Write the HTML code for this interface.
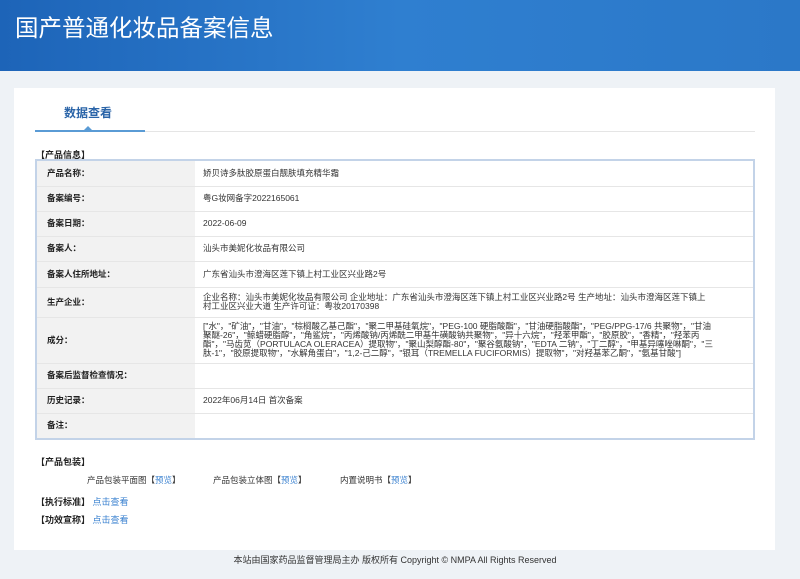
<!DOCTYPE html><html><head><meta charset="utf-8"><style>
body{margin:0;width:800px;height:579px;background:#eef2f6;font-family:"Liberation Sans","Noto Sans CJK SC",sans-serif;overflow:hidden;position:relative}
.hd{position:absolute;left:0;top:0;width:800px;height:71px;background:linear-gradient(90deg,#1d64b8,#2f7fd0 50%,#2b78c8)}
.hd h1{margin:0;position:absolute;left:15px;top:9px;font-size:23.5px;font-weight:normal;color:#fff;letter-spacing:0}
.pn{position:absolute;left:14px;top:88px;width:761px;height:462px;background:#fff}
.tab{position:absolute;left:64px;top:104px;font-size:12px;color:#2a64a8;font-weight:bold}
.ul{position:absolute;left:35px;top:130px;width:110px;height:2px;background:#5a9bd5}
.gl{position:absolute;left:145px;top:131px;width:610px;height:1px;background:#e5e5e5}
.tri{position:absolute;left:84px;top:126px;border:4px solid transparent;border-bottom-color:#5a9bd5;border-top:0}
.s{position:absolute;font-size:9px;color:#222;font-weight:bold}
table{position:absolute;left:35px;top:159px;width:720px;border-collapse:collapse;border:2px solid #c3d3e8;font-size:8.5px;color:#333}
td{border-bottom:1px solid #e6e6e6;padding:0 8px;line-height:9px}
td.l{width:140px;background:#f2f2f2;font-weight:bold;color:#222;padding-left:10px}
td.w{padding-right:40px}
.t{position:absolute;font-size:8.5px;color:#333}
a{color:#3b82d0;text-decoration:none}
.ft{position:absolute;top:553px;left:0;width:790px;text-align:center;font-size:9px;color:#333}
</style></head><body>
<div class="hd"><h1>国产普通化妆品备案信息</h1></div>
<div class="pn"></div>
<div class="tab">数据查看</div><div class="ul"></div><div class="gl"></div><div class="tri"></div>
<div class="s" style="left:36px;top:148px">【产品信息】</div>
<table>
<tr style="height:26px"><td class="l">产品名称：</td><td>娇贝诗多肽胶原蛋白靓肤填充精华霜</td></tr>
<tr style="height:25px"><td class="l">备案编号：</td><td>粤G妆网备字2022165061</td></tr>
<tr style="height:25px"><td class="l">备案日期：</td><td>2022-06-09</td></tr>
<tr style="height:25px"><td class="l">备案人：</td><td>汕头市美妮化妆品有限公司</td></tr>
<tr style="height:26px"><td class="l">备案人住所地址：</td><td>广东省汕头市澄海区莲下镇上村工业区兴业路2号</td></tr>
<tr style="height:30px"><td class="l">生产企业：</td><td class="w">企业名称：汕头市美妮化妆品有限公司 企业地址：广东省汕头市澄海区莲下镇上村工业区兴业路2号 生产地址：汕头市澄海区莲下镇上村工业区兴业大道 生产许可证：粤妆20170398</td></tr>
<tr style="height:46px"><td class="l">成分：</td><td class="w">["水"，"矿油"，"甘油"，"棕榈酸乙基己酯"，"聚二甲基硅氧烷"，"PEG-100 硬脂酸酯"，"甘油硬脂酸酯"，"PEG/PPG-17/6 共聚物"，"甘油聚醚-26"，"鲸蜡硬脂醇"，"角鲨烷"，"丙烯酸钠/丙烯酰二甲基牛磺酸钠共聚物"，"异十六烷"，"羟苯甲酯"，"胶原胶"，"香精"，"羟苯丙酯"，"马齿苋（PORTULACA OLERACEA）提取物"，"聚山梨醇酯-80"，"聚谷氨酸钠"，"EDTA 二钠"，"丁二醇"，"甲基异噻唑啉酮"，"三肽-1"，"胶原提取物"，"水解角蛋白"，"1,2-己二醇"，"银耳（TREMELLA FUCIFORMIS）提取物"，"对羟基苯乙酮"，"氨基甘酸"]</td></tr>
<tr style="height:25px"><td class="l">备案后监督检查情况：</td><td></td></tr>
<tr style="height:25px"><td class="l">历史记录：</td><td>2022年06月14日 首次备案</td></tr>
<tr style="height:26px"><td class="l">备注：</td><td></td></tr>
</table>
<div class="s" style="left:36px;top:455px">【产品包装】</div>
<div class="t" style="left:87px;top:474px">产品包装平面图【<a>预览</a>】</div>
<div class="t" style="left:213px;top:474px">产品包装立体图【<a>预览</a>】</div>
<div class="t" style="left:340px;top:474px">内置说明书【<a>预览</a>】</div>
<div class="s" style="left:36px;top:495px">【执行标准】 <a style="font-weight:normal">点击查看</a></div>
<div class="s" style="left:36px;top:513px">【功效宣称】 <a style="font-weight:normal">点击查看</a></div>
<div class="ft">本站由国家药品监督管理局主办 版权所有 Copyright © NMPA All Rights Reserved</div>
</body></html>
